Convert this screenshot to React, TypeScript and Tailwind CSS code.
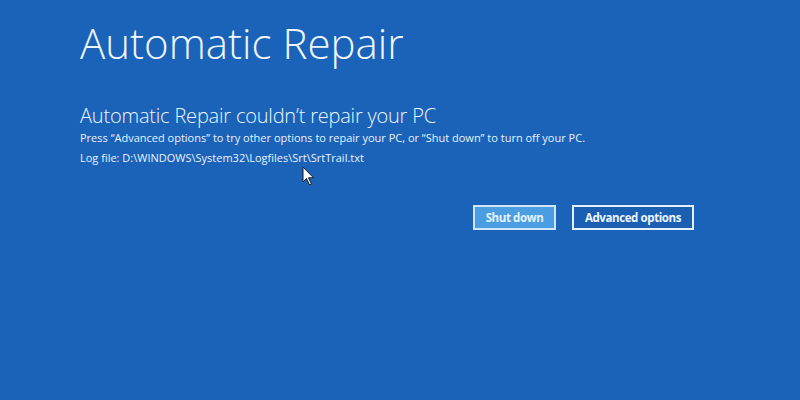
import React from "react";

export default function App() {
  return (
    <div className="relative w-[800px] h-[400px] overflow-hidden bg-[#1b63b8] text-white" style={{ fontFamily: '"Open Sans", "Noto Sans", sans-serif' }}>
      <div className="pl-[80px] pt-[17px] w-[700px] pr-[6px]">
        <h1 className="text-[42px] leading-[52px] font-light text-[#eef6ff]">Automatic Repair</h1>
        <h2 className="mt-[35px] text-[20px] leading-[24px] font-light text-[#eef6ff] tracking-[-0.2px]">Automatic Repair couldn’t repair your PC</h2>
        <p className="text-[11px] leading-[20px] text-[#e8f2ff]">Press “Advanced options” to try other options to repair your PC, or “Shut down” to turn off your PC.</p>
        <p className="text-[11px] leading-[20px] text-[#e8f2ff]">Log file: D:\WINDOWS\System32\Logfiles\Srt\SrtTrail.txt</p>
        <div className="mt-[37px] flex justify-end gap-[16px]">
          <button className="w-[83px] h-[25px] border-2 border-[#cfe6fa] bg-[#4a9de0] text-[11.5px] leading-[21px] font-bold text-[#e6f3ff] tracking-[-0.4px]">Shut down</button>
          <button className="w-[122px] h-[25px] border-2 border-[#e4f0fb] bg-[#1b5fb3] text-[11.5px] leading-[21px] font-bold text-[#eef6ff] tracking-[-0.4px]">Advanced options</button>
        </div>
      </div>
      <svg className="absolute left-[302px] top-[166px]" width="14" height="21" viewBox="0 0 14 21">
        <path d="M1 1 L1 16 L4.5 12.5 L7.5 19 L9.5 18 L6.5 11.8 L11.5 11.8 Z" fill="#ffffff" stroke="#1a1a1a" strokeWidth="1" strokeLinejoin="round" />
      </svg>
    </div>
  );
}
